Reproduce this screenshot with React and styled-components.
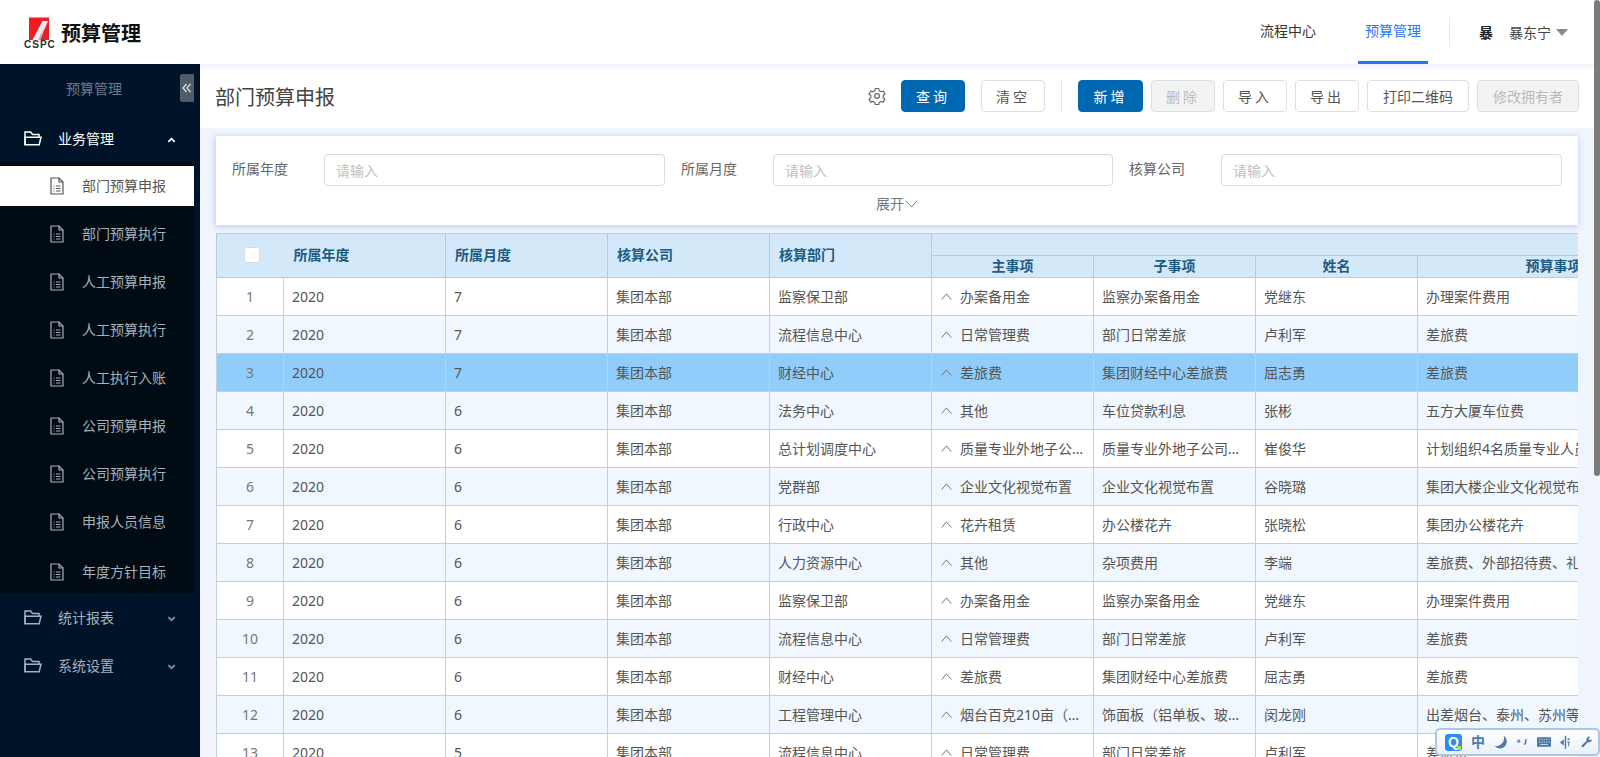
import React from 'react'
import styled, { createGlobalStyle } from 'styled-components'

const GlobalStyle = createGlobalStyle`
  html, body {
    margin: 0;
    height: 100%;
    overflow: hidden;
    background: #fff;
    font-family: "Noto Sans", "Noto Sans CJK SC", sans-serif;
    font-size: 14px;
    color: #555;
  }
  * { box-sizing: border-box; }
`

const Page = styled.div`
  position: relative;
  width: 1600px;
  height: 757px;
  overflow: hidden;
`
const Header = styled.header`
  position: relative;
  z-index: 2;
  height: 64px;
  display: flex;
  align-items: center;
  background: #fff;
  padding-right: 32px;
  box-shadow: 0 2px 6px rgba(190, 205, 250, 0.35);
`
const Brand = styled.div`
  display: flex;
  align-items: center;
  margin-left: 24px;
  flex: 1;
`
const BrandName = styled.div`
  margin-left: 5px;
  font-size: 20px;
  font-weight: 700;
  color: #111;
`
const NavLink = styled.a`
  position: relative;
  width: 70px;
  height: 64px;
  margin-right: ${(p) => p.$gap}px;
  line-height: 62px;
  text-align: center;
  color: ${(p) => (p.$active ? '#2a75f0' : '#333')};
  border-bottom: 3px solid ${(p) => (p.$active ? '#2a75f0' : 'transparent')};
`
const NavDivider = styled.div`
  width: 1px;
  height: 30px;
  background: #e6e8ec;
  margin: 0 29px 0 21px;
`
const Avatar = styled.span`
  font-weight: 700;
  color: #222;
  margin-right: 16px;
`
const UserName = styled.span`
  color: #444;
`
const Caret = styled.i`
  width: 0;
  height: 0;
  margin-left: 5px;
  border: 6px solid transparent;
  border-top: 7px solid #8a8a8a;
  border-bottom: 0;
`
const Body = styled.div`
  display: flex;
  height: 693px;
`
const Sidebar = styled.aside`
  position: relative;
  z-index: 3;
  width: 200px;
  flex: none;
  background: #001429;
`
const SideTitle = styled.div`
  position: relative;
  height: 50px;
  line-height: 50px;
  padding-left: 66px;
  color: #6d7b89;
`
const Collapse = styled.button`
  position: absolute;
  top: 10px;
  right: 6px;
  width: 14px;
  height: 28px;
  padding: 0;
  border: 0;
  border-radius: 2px 0 0 2px;
  background: #4f5d6b;
  color: #dfe3e8;
  display: flex;
  align-items: center;
  justify-content: center;
`
const Group = styled.div`
  display: flex;
  align-items: center;
  height: 48px;
  padding-left: 24px;
  color: ${(p) => (p.$open ? '#fff' : '#a9b0b8')};
`
const GroupLabel = styled.span`
  margin-left: 16px;
  flex: 1;
`
const GroupArrow = styled.span`
  display: flex;
  margin: 3px 24px 0 0;
  color: ${(p) => (p.$open ? '#fff' : '#8a939c')};
`
const SubMenu = styled.div`
  width: 194px;
  background: #000b14;
  padding-top: 4px;
`
const SubItem = styled.div`
  display: flex;
  align-items: center;
  height: 40px;
  margin-bottom: 8px;
  padding-left: 50px;
  background: ${(p) => (p.$active ? '#fff' : 'transparent')};
  color: ${(p) => (p.$active ? '#555' : '#a9b0b8')};
  &:last-child { margin-bottom: 0; height: 43px; }
`
const SubLabel = styled.span`
  margin: 0 0 2px 18px;
`
const Main = styled.main`
  flex: 1;
  min-width: 0;
  background: #f0f4fd;
`
const Toolbar = styled.div`
  height: 64px;
  display: flex;
  align-items: center;
  background: #fff;
  padding: 0 21px 0 15px;
`
const PageTitle = styled.h1`
  flex: 1;
  margin: 0;
  font-size: 20px;
  font-weight: 400;
  color: #444;
`
const GearWrap = styled.span`
  display: flex;
  margin-right: 15px;
  color: #666;
`
const Btn = styled.button`
  width: ${(p) => p.$w || 64}px;
  height: 32px;
  margin-right: ${(p) => p.$mr ?? 8}px;
  padding: 0;
  border-radius: 4px;
  border: 1px solid ${(p) => (p.$primary ? '#0068b0' : '#dcdfe6')};
  background: ${(p) => (p.$primary ? '#0068b0' : p.disabled ? '#f3f3f3' : '#fff')};
  color: ${(p) => (p.$primary ? '#fff' : p.disabled ? '#bbb' : '#555')};
  font-family: inherit;
  font-size: 14px;
  letter-spacing: ${(p) => (p.$wide ? '3px' : 0)};
  &:last-child { margin-right: 0; }
`
const ToolDivider = styled.div`
  width: 1px;
  height: 32px;
  background: #e3e6ea;
  margin: 0 16px;
`
const Content = styled.div`
  padding: 8px 22px 0 16px;
`
const FilterCard = styled.section`
  height: 89px;
  background: #fff;
  box-shadow: 0 2px 6px #c6d2fa, -2px 0 5px #d5defb;
  padding-top: 18px;
`
const FilterRow = styled.div`
  display: flex;
  padding-left: 16px;
`
const FilterLabel = styled.label`
  width: 92px;
  line-height: 32px;
  color: #666;
  margin-top: -1px;
`
const FilterInput = styled.input`
  width: ${(p) => p.$w}px;
  height: 32px;
  margin-right: 16px;
  padding: 0 11px;
  border: 1px solid #d8dade;
  border-radius: 4px;
  font-family: inherit;
  font-size: 14px;
  &::placeholder { color: #c0c0c0; }
`
const Expand = styled.div`
  display: flex;
  align-items: center;
  justify-content: center;
  gap: 1px;
  margin-top: 8px;
  color: #777;
  line-height: 20px;
`
const TableWrap = styled.div`
  margin-top: 8px;
  overflow: hidden;
`
const Table = styled.table`
  width: 1473px;
  table-layout: fixed;
  border-collapse: collapse;
  color: #555;
`
const Th = styled.th`
  height: ${(p) => p.$h || 22}px;
  padding: 0 ${(p) => (p.$left ? 9 : 0)}px 1px;
  border: 1px solid #b8cbdc;
  background: #d3e9f9;
  color: #1d5c82;
  font-weight: 700;
  font-size: 14px;
  line-height: 20px;
  text-align: ${(p) => (p.$left ? 'left' : 'center')};
`
const CheckHead = styled(Th)`
  border-right: 0;
  padding-left: 27px;
  text-align: left;
`
const YearHead = styled(Th)`
  border-left: 0;
  padding-left: 10px;
  text-align: left;
`
const Checkbox = styled.span`
  display: block;
  width: 16px;
  height: 16px;
  background: #fff;
  border: 1px solid #d6dbe0;
  border-radius: 2px;
`
const Row = styled.tr`
  background: ${(p) => (p.$selected ? '#90cdfb' : p.$alt ? '#f0f7fe' : '#fff')};
`
const Td = styled.td`
  height: 38px;
  padding: 0 8px 1px;
  border: 1px solid #c6d0da;
  white-space: nowrap;
  overflow: hidden;
  text-overflow: ellipsis;
`
const SeqCell = styled(Td)`
  text-align: center;
  color: #777;
`
const MainCell = styled(Td)`
  padding-left: 9px;
`
const MainInner = styled.div`
  display: flex;
  align-items: center;
  svg { flex: none; }
`
const MainText = styled.span`
  margin-left: 8px;
  min-width: 0;
  white-space: nowrap;
  overflow: hidden;
  text-overflow: ellipsis;
`
const ScrollThumb = styled.div`
  position: absolute;
  z-index: 4;
  top: 0;
  right: 0;
  width: 6px;
  height: 476px;
  background: #7b7b7b;
  border-radius: 3px;
`
const ImeBar = styled.div`
  position: absolute;
  z-index: 4;
  left: 1435px;
  top: 728px;
  width: 165px;
  height: 28px;
  display: flex;
  align-items: center;
  padding: 0 6px 0 8px;
  gap: 9px;
  border: 2px solid #a9c7e8;
  border-radius: 5px;
  background: linear-gradient(#ffffff, #eaf0f7);
  color: #4f7aa8;
`
const ImeLogo = styled.span`
  position: relative;
  flex: none;
  width: 17px;
  height: 17px;
  border-radius: 3px;
  background: #2b8bf5;
  color: #fff;
  font: 700 14px/17px "Liberation Sans", sans-serif;
  text-align: center;
`
const ImeDot = styled.i`
  position: absolute;
  right: 1px;
  bottom: 1px;
  width: 4px;
  height: 4px;
  background: #b7e04a;
`
const ImeText = styled.span`
  font-size: 14px;
  font-weight: 700;
  line-height: 20px;
`

const rows = [
  ['2020', '7', '监察保卫部', '办案备用金', '监察办案备用金', '党继东', '办理案件费用'],
  ['2020', '7', '流程信息中心', '日常管理费', '部门日常差旅', '卢利军', '差旅费'],
  ['2020', '7', '财经中心', '差旅费', '集团财经中心差旅费', '屈志勇', '差旅费'],
  ['2020', '6', '法务中心', '其他', '车位贷款利息', '张彬', '五方大厦车位费'],
  ['2020', '6', '总计划调度中心', '质量专业外地子公司检查', '质量专业外地子公司检查差旅', '崔俊华', '计划组织4名质量专业人员赴外地子公司检查'],
  ['2020', '6', '党群部', '企业文化视觉布置', '企业文化视觉布置', '谷晓璐', '集团大楼企业文化视觉布置费用'],
  ['2020', '6', '行政中心', '花卉租赁', '办公楼花卉', '张晓松', '集团办公楼花卉'],
  ['2020', '6', '人力资源中心', '其他', '杂项费用', '李端', '差旅费、外部招待费、礼品费等费用'],
  ['2020', '6', '监察保卫部', '办案备用金', '监察办案备用金', '党继东', '办理案件费用'],
  ['2020', '6', '流程信息中心', '日常管理费', '部门日常差旅', '卢利军', '差旅费'],
  ['2020', '6', '财经中心', '差旅费', '集团财经中心差旅费', '屈志勇', '差旅费'],
  ['2020', '6', '工程管理中心', '烟台百克210亩（二期）', '饰面板（铝单板、玻璃）采购', '闵龙刚', '出差烟台、泰州、苏州等地考察费用'],
  ['2020', '5', '流程信息中心', '日常管理费', '部门日常差旅', '卢利军', '差旅费'],
]

const subItems = ['部门预算申报', '部门预算执行', '人工预算申报', '人工预算执行', '人工执行入账', '公司预算申报', '公司预算执行', '申报人员信息', '年度方针目标']

const Logo = () => (
  <svg width="32" height="31" viewBox="0 0 32 31">
    <rect x="5" y="0.5" width="20" height="22.500" fill="#f01c24" />
    <path d="M8.500 23 L18.500 4 H24 L16 23 Z" fill="#ededf2" />
    <path d="M14 23 L21 8 L16 23 Z" fill="#b5b5bc" />
    <text x="0" y="30.5" fontFamily="Liberation Sans" fontWeight="700" fontSize="10" letterSpacing="1" fill="#2b2b33">CSPC</text>
  </svg>
)

const FolderIcon = () => (
  <svg width="18" height="15" viewBox="0 0 18 15" fill="none" stroke="currentColor" strokeWidth="1.5">
    <path d="M1 13.7V1h5.6l2 2.4H15v2.8" />
    <path d="M1 13.7h14.2L17 6.2H1z" />
  </svg>
)

const DocIcon = () => (
  <svg width="14" height="18" viewBox="0 0 14 18" fill="none" stroke="currentColor" strokeWidth="1.2">
    <path d="M1 1h8l4 4v12H1z" />
    <path d="M9 1v4h4" />
    <path d="M3.5 9h1M6 9h4.5M3.5 11.5h1M6 11.5h4.5M3.5 14h1M6 14h4.5" />
  </svg>
)

const Chevron = ({ up }) => (
  <svg width="9" height="6" viewBox="0 0 10 6" fill="none" stroke="currentColor" strokeWidth="2">
    <path d={up ? 'M1.5 5 L5 1.5 L8.5 5' : 'M1.5 1 L5 4.5 L8.5 1'} />
  </svg>
)

const ThinCaret = () => (
  <svg width="11" height="7" viewBox="0 0 11 7" fill="none" stroke="#777" strokeWidth="1">
    <path d="M0.7 6.5 L5.5 0.9 L10.3 6.5" />
  </svg>
)

const Gear = () => (
  <svg width="18" height="18" viewBox="0 0 24 24" fill="none" stroke="currentColor" strokeWidth="1.6" strokeLinejoin="round">
    <path d="M9.7 2h4.6l.6 3 2.5 1.4 2.9-1 2.3 4-2.3 2v2.9l2.3 1.9-2.3 4-2.9-1-2.5 1.5-.6 2.9H9.7l-.6-2.9-2.500-1.500-2.900 1-2.300-4 2.300-1.900v-2.900l-2.300-2 2.300-4 2.900 1L9.100 5z" />
    <circle cx="12" cy="12" r="3.2" />
  </svg>
)

export default function App() {
  return (
    <>
      <GlobalStyle />
      <Page>
        <Header>
          <Brand>
            <Logo />
            <BrandName>预算管理</BrandName>
          </Brand>
          <NavLink $gap={35}>流程中心</NavLink>
          <NavLink $active $gap={0}>预算管理</NavLink>
          <NavDivider />
          <Avatar>暴</Avatar>
          <UserName>暴东宁</UserName>
          <Caret />
        </Header>
        <Body>
          <Sidebar>
            <SideTitle>
              预算管理
              <Collapse aria-label="收起">
                <svg width="10" height="10" viewBox="0 0 10 10" fill="none" stroke="currentColor" strokeWidth="1.2">
                  <path d="M4.5 1 L1 5 L4.5 9 M8.5 1 L5 5 L8.5 9" />
                </svg>
              </Collapse>
            </SideTitle>
            <Group $open>
              <FolderIcon />
              <GroupLabel>业务管理</GroupLabel>
              <GroupArrow $open><Chevron up /></GroupArrow>
            </Group>
            <SubMenu>
              {subItems.map((t, i) => (
                <SubItem key={t} $active={i === 0}>
                  <DocIcon />
                  <SubLabel>{t}</SubLabel>
                </SubItem>
              ))}
            </SubMenu>
            <Group>
              <FolderIcon />
              <GroupLabel>统计报表</GroupLabel>
              <GroupArrow><Chevron /></GroupArrow>
            </Group>
            <Group>
              <FolderIcon />
              <GroupLabel>系统设置</GroupLabel>
              <GroupArrow><Chevron /></GroupArrow>
            </Group>
          </Sidebar>
          <Main>
            <Toolbar>
              <PageTitle>部门预算申报</PageTitle>
              <GearWrap><Gear /></GearWrap>
              <Btn $primary $wide $mr={16}>查询</Btn>
              <Btn $wide $mr={0}>清空</Btn>
              <ToolDivider />
              <Btn $primary $wide $w={65}>新增</Btn>
              <Btn $wide disabled>删除</Btn>
              <Btn $wide>导入</Btn>
              <Btn $wide>导出</Btn>
              <Btn $w={102}>打印二维码</Btn>
              <Btn $w={102} disabled>修改拥有者</Btn>
            </Toolbar>
            <Content>
              <FilterCard>
                <FilterRow>
                  <FilterLabel>所属年度</FilterLabel>
                  <FilterInput $w={341} placeholder="请输入" />
                  <FilterLabel>所属月度</FilterLabel>
                  <FilterInput $w={340} placeholder="请输入" />
                  <FilterLabel>核算公司</FilterLabel>
                  <FilterInput $w={341} placeholder="请输入" />
                </FilterRow>
                <Expand>
                  展开
                  <svg width="13" height="8" viewBox="0 0 13 8" fill="none" stroke="#777" strokeWidth="1">
                    <path d="M0.7 0.7 L6.5 6.8 L12.3 0.7" />
                  </svg>
                </Expand>
              </FilterCard>
              <TableWrap>
                <Table>
                  <colgroup>
                    <col width="67" />
                    <col width="162" />
                    <col width="162" />
                    <col width="162" />
                    <col width="162" />
                    <col width="162" />
                    <col width="162" />
                    <col width="162" />
                    <col width="272" />
                  </colgroup>
                  <thead>
                    <tr>
                      <CheckHead rowSpan={2}><Checkbox /></CheckHead>
                      <YearHead rowSpan={2}>所属年度</YearHead>
                      <Th rowSpan={2} $left>所属月度</Th>
                      <Th rowSpan={2} $left>核算公司</Th>
                      <Th rowSpan={2} $left>核算部门</Th>
                      <Th colSpan={4} />
                    </tr>
                    <tr>
                      <Th>主事项</Th>
                      <Th>子事项</Th>
                      <Th>姓名</Th>
                      <Th>预算事项</Th>
                    </tr>
                  </thead>
                  <tbody>
                    {rows.map((r, i) => (
                      <Row key={i} $alt={i % 2 === 1} $selected={i === 2}>
                        <SeqCell>{i + 1}</SeqCell>
                        <Td>{r[0]}</Td>
                        <Td>{r[1]}</Td>
                        <Td>集团本部</Td>
                        <Td>{r[2]}</Td>
                        <MainCell>
                          <MainInner>
                            <ThinCaret />
                            <MainText>{r[3]}</MainText>
                          </MainInner>
                        </MainCell>
                        <Td>{r[4]}</Td>
                        <Td>{r[5]}</Td>
                        <Td>{r[6]}</Td>
                      </Row>
                    ))}
                  </tbody>
                </Table>
              </TableWrap>
            </Content>
          </Main>
        </Body>
        <ScrollThumb />
        <ImeBar>
          <ImeLogo>Q<ImeDot /></ImeLogo>
          <ImeText>中</ImeText>
          <svg width="15" height="15" viewBox="0 0 14 14" fill="currentColor">
            <path d="M9.5 0.5 A6.8 6.8 0 1 1 0.5 10.5 A8 8 0 0 0 9.5 0.5 Z" />
          </svg>
          <svg width="11" height="8" viewBox="0 0 12 8" fill="none" stroke="currentColor" strokeWidth="1.3">
            <circle cx="2" cy="3" r="1.3" />
            <path d="M10 0.8v3c0 1.4-.6 2.4-1.8 3.2" strokeWidth="1.8" />
          </svg>
          <svg width="15" height="10" viewBox="0 0 15 10" fill="currentColor">
            <path d="M0 0h15v10H0zM2 2v1h1V2zm2.500 0v1h1V2zm2.500 0v1h1V2zm2.500 0v1h1V2zm2.500 0v1h1V2zM2 4.500v1h1v-1zm2.500 0v1h1v-1zm2.500 0v1h1v-1zm2.500 0v1h1v-1zm2.500 0v1h1v-1zM3.500 7v1h8V7z" fillRule="evenodd" />
          </svg>
          <svg width="12" height="14" viewBox="0 0 12 14" fill="currentColor">
            <path d="M5 0.500h1.500V14H5zM0 7.500L4 4v7zM8 3h2v2H8zM7.500 6.500h3v1h-1v4h-1v-4h-1z" />
          </svg>
          <svg width="12" height="12" viewBox="0 0 14 14" fill="currentColor">
            <path d="M13.500 3.500a3.800 3.800 0 0 1-5 3.600L3 13a1.400 1.400 0 0 1-2-2l5.800-5.500a3.800 3.800 0 0 1 4.600-5L9 3l2 2z" />
          </svg>
        </ImeBar>
      </Page>
    </>
  )
}
